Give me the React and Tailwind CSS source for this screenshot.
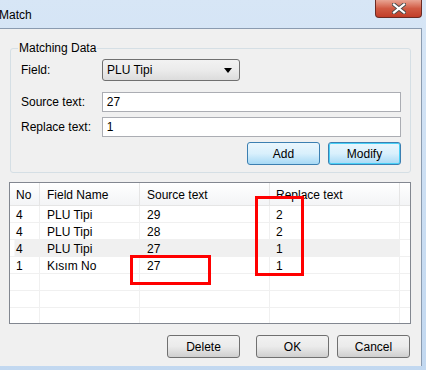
import React from 'react';

const font = { fontFamily: '"Liberation Sans", Arial, sans-serif' };

const rows = [
  { no: '4', field: 'PLU Tipi', src: '29', rep: '2' },
  { no: '4', field: 'PLU Tipi', src: '28', rep: '2' },
  { no: '4', field: 'PLU Tipi', src: '27', rep: '1', hl: true },
  { no: '1', field: 'Kısım No', src: '27', rep: '1' },
  { no: '', field: '', src: '', rep: '' },
  { no: '', field: '', src: '', rep: '' },
  { no: '', field: '', src: '', rep: '' },
];

const Btn = ({ children, blue, focus }) => (
  <button
    className={`w-[73px] h-[23px] rounded-[3px] border text-[12px] text-black flex items-center justify-center ${
      blue
        ? `${focus ? 'border-[#3c7fb1] shadow-[inset_0_0_0_1px_#48d0f7]' : 'border-[#3c7fb1]'} bg-gradient-to-b from-[#eaf6fd] via-[#d9f0fc] to-[#a7d9f5]`
        : 'border-[#707070] bg-gradient-to-b from-[#f2f2f2] via-[#ebebeb] to-[#cfcfcf]'
    }`}
  >
    {children}
  </button>
);

const Input = ({ value }) => (
  <div className="w-[300px] h-[20px] bg-white border border-[#abadb3] flex items-center pl-[4px] text-[12px] text-black">
    {value}
  </div>
);

export default function App() {
  return (
    <div style={font} className="w-[426px] h-[370px] bg-gradient-to-b from-[#d7e6f6] to-[#c2d8f0] flex flex-col overflow-hidden text-black">
      {/* title bar */}
      <div className="h-[28px] flex items-start relative shrink-0">
        <span className="text-[12px] mt-[6px] -ml-[1px]">Match</span>
        <div className="absolute left-[375px] top-0 w-[47px] h-[18px] rounded-b-[4px] border border-t-0 border-[#6b2a23] bg-gradient-to-b from-[#e8a493] via-[#d05a43] to-[#c13d28] flex items-center justify-center">
          <svg width="14" height="11" viewBox="0 0 14 11">
            <path d="M2 1.5 L12 9.5 M12 1.5 L2 9.5" stroke="#4a4a4a" strokeWidth="4" strokeLinecap="square" />
            <path d="M2 1.5 L12 9.5 M12 1.5 L2 9.5" stroke="#ffffff" strokeWidth="2.2" strokeLinecap="square" />
          </svg>
        </div>
      </div>

      {/* body */}
      <div className="relative w-[422px] h-[338px] bg-[#f0f0f0] border-t border-r border-[#8a9bb0] shrink-0">
        {/* group box */}
        <div className="relative mt-[19px] ml-[10px] w-[401px] h-[125px] border border-[#d5dfe5] rounded-[3px] pl-[10px] pr-[9px] pt-[10px] flex flex-col">
          <span className="absolute -top-[8px] left-[7px] px-[1px] bg-[#f0f0f0] text-[12px] leading-[14px]">Matching Data</span>
          <div className="flex items-center h-[22px]">
            <span className="w-[81px] text-[12px]">Field:</span>
            <div className="w-[138px] h-[22px] rounded-[3px] border border-[#707070] bg-gradient-to-b from-[#f2f2f2] via-[#ebebeb] to-[#dcdcdc] flex items-center justify-between pl-[4px] pr-[7px] text-[12px]">
              <span>PLU Tipi</span>
              <svg width="8" height="5" viewBox="0 0 8 5"><path d="M0 0 H8 L4 5 Z" fill="#000" /></svg>
            </div>
          </div>
          <div className="flex items-center h-[20px] mt-[11px]">
            <span className="w-[81px] text-[12px]">Source text:</span>
            <Input value="27" />
          </div>
          <div className="flex items-center h-[20px] mt-[5px]">
            <span className="w-[81px] text-[12px]">Replace text:</span>
            <Input value="1" />
          </div>
          <div className="flex justify-end gap-[8px] mt-[5px]">
            <Btn blue>Add</Btn>
            <Btn blue focus>Modify</Btn>
          </div>
        </div>

        {/* list view */}
        <div className="mt-[9px] ml-[9px] w-[402px] h-[142px] border border-[#828790] bg-white overflow-hidden">
          <div className="flex h-[23px] bg-gradient-to-b from-white to-[#f3f4f6] border-b border-[#e5e5e5] text-[12px]">
            <div className="w-[30px] pl-[6px] pt-[2px] flex items-center border-r border-[#e5e5e5]">No</div>
            <div className="w-[100px] pl-[7px] pt-[2px] flex items-center border-r border-[#e5e5e5]">Field Name</div>
            <div className="w-[130px] pl-[7px] pt-[2px] flex items-center border-r border-[#e5e5e5]">Source text</div>
            <div className="w-[130px] pl-[6px] pt-[2px] flex items-center border-r border-[#e5e5e5]">Replace text</div>
            <div className="flex-1" />
          </div>
          {rows.map((r, i) => (
            <div key={i} className="flex h-[17px] text-[12px] border-b border-[#f0f0f0]">
              <div className={`w-[30px] pl-[6px] pt-[2px] flex items-center border-r border-[#f0f0f0] ${r.hl ? 'bg-gradient-to-r from-white from-[15%] to-[#f0f0f0] to-[16%]' : ''}`}>{r.no}</div>
              <div className={`w-[100px] pl-[7px] pt-[2px] flex items-center border-r border-[#f0f0f0] ${r.hl ? 'bg-[#f0f0f0]' : ''}`}>{r.field}</div>
              <div className={`w-[130px] pl-[7px] pt-[2px] flex items-center border-r border-[#f0f0f0] ${r.hl ? 'bg-[#f0f0f0]' : ''}`}>{r.src}</div>
              <div className={`w-[130px] pl-[6px] pt-[2px] flex items-center border-r border-[#f0f0f0] ${r.hl ? 'bg-[#f0f0f0]' : ''}`}>{r.rep}</div>
              <div className="flex-1" />
            </div>
          ))}
        </div>

        {/* bottom buttons */}
        <div className="flex mt-[11px] ml-[167px]">
          <Btn>Delete</Btn>
          <div className="ml-[16px]"><Btn>OK</Btn></div>
          <div className="ml-[8px]"><Btn>Cancel</Btn></div>
        </div>

        {/* red annotation boxes */}
        <div className="absolute left-[130px] top-[226px] w-[81px] h-[30px] border-[3px] border-[#ff0000]" />
        <div className="absolute left-[255px] top-[167px] w-[49px] h-[80px] border-[3px] border-[#ff0000]" />
      </div>
    </div>
  );
}
